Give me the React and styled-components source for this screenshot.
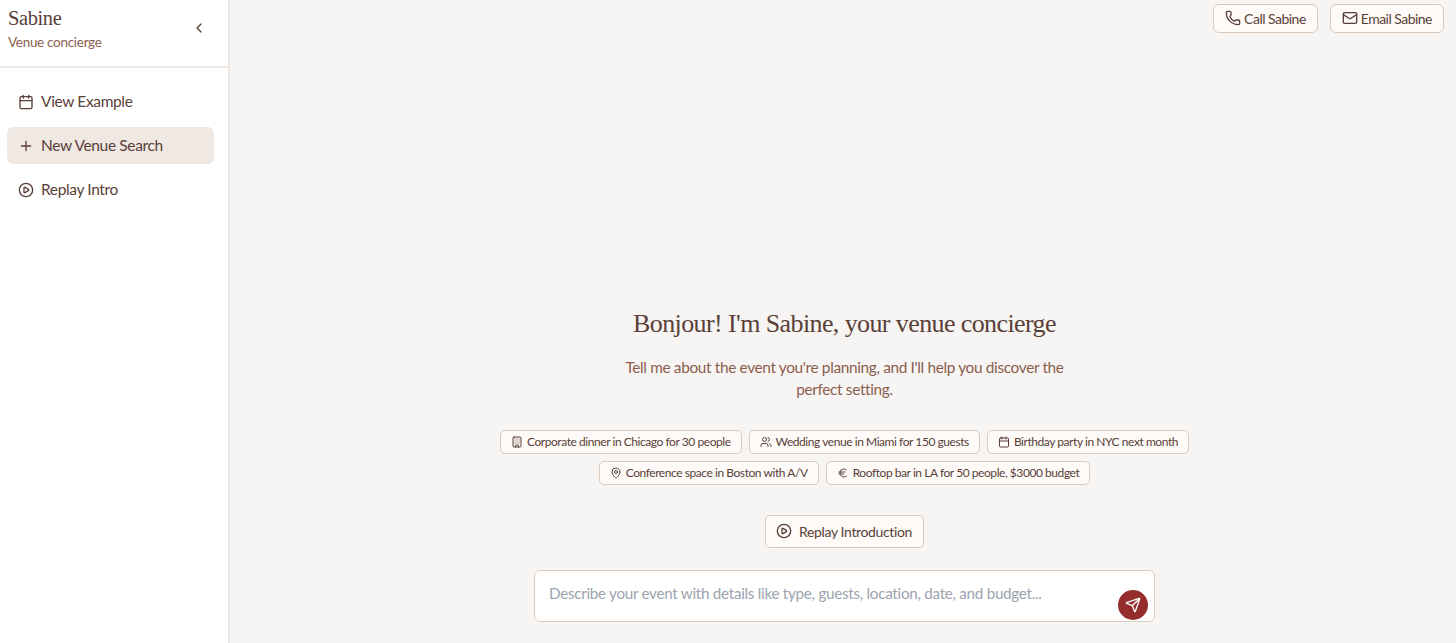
import React from 'react';
import styled, { createGlobalStyle } from 'styled-components';
import {
  Building,
  Calendar,
  ChevronLeft,
  CirclePlay,
  Euro,
  Mail,
  MapPin,
  Phone,
  Plus,
  Send,
  Users,
} from 'lucide-react';

const GlobalStyle = createGlobalStyle`
  html, body {
    margin: 0;
    height: 100%;
    overflow: hidden;
    background: #f7f5f3;
    font-family: "Lato", "Liberation Sans", sans-serif;
    color: #5a3f38;
  }
  #root { height: 100%; }
  * { box-sizing: border-box; }
`;

const Page = styled.div`
  display: flex;
  height: 643px;
`;

const Sidebar = styled.aside`
  width: 230px;
  flex-shrink: 0;
  background: #fff;
  border-right: 2px solid #efe9e5;
`;

const SidebarHeader = styled.div`
  height: 68px;
  display: flex;
  align-items: flex-start;
  justify-content: space-between;
  padding: 6px 21px 0 8px;
  border-bottom: 2px solid #efe9e5;
`;

const Brand = styled.h1`
  margin: 0;
  font-family: "Liberation Serif", serif;
  font-weight: 400;
  font-size: 20.5px;
  letter-spacing: -0.4px;
  line-height: 25px;
  color: #5a3f38;
`;

const Tagline = styled.div`
  margin-top: 2px;
  font-size: 13.5px;
  letter-spacing: -0.3px;
  line-height: 18px;
  color: #8b5e4f;
`;

const CollapseButton = styled.button`
  display: flex;
  margin-top: 14px;
  padding: 0;
  border: none;
  background: none;
  color: #5a3f38;
`;

const SideNav = styled.nav`
  display: flex;
  flex-direction: column;
  gap: 7px;
  padding: 15px 14px 0 7px;
`;

const NavItem = styled.a`
  display: flex;
  align-items: center;
  gap: 7px;
  height: 37px;
  padding: 0 0 2px 11px;
  border-radius: 6px;
  font-size: 15.5px;
  letter-spacing: -0.36px;
  color: #5a3f38;
  background: ${({ $active }) => ($active ? '#f0e8e3' : 'transparent')};

  svg {
    margin-top: 2px;
  }
`;

const Main = styled.main`
  flex: 1;
  display: flex;
  flex-direction: column;
  padding: 4px 12px 21px 15px;
`;

const TopBar = styled.div`
  display: flex;
  justify-content: flex-end;
  gap: 12px;
`;

const TopButton = styled.button`
  display: flex;
  align-items: center;
  gap: 3px;
  height: 29px;
  padding: 0 11px 1px;
  border: 1px solid #dacabd;
  border-radius: 6px;
  background: #fdfaf8;
  font-family: inherit;
  font-size: 14px;
  letter-spacing: -0.52px;
  color: #5a3f38;
`;

const Center = styled.div`
  flex: 1;
  display: flex;
  flex-direction: column;
  align-items: center;
  justify-content: flex-end;
`;

const Heading = styled.h2`
  margin: 0;
  font-family: "Liberation Serif", serif;
  font-weight: 400;
  font-size: 26px;
  letter-spacing: -0.6px;
  line-height: 34px;
  color: #5a3f38;
`;

const Intro = styled.p`
  margin: 15px 0 0;
  width: 448px;
  text-align: center;
  font-size: 15.4px;
  letter-spacing: -0.35px;
  line-height: 22px;
  color: #8b5e4f;
`;

const Chips = styled.div`
  display: flex;
  flex-wrap: wrap;
  justify-content: center;
  gap: 7px;
  width: 720px;
  margin-top: 30px;
`;

const Chip = styled.button`
  display: flex;
  align-items: center;
  gap: 4px;
  height: 24px;
  padding: 0 10px 1px;
  border: 1px solid #dacabd;
  border-radius: 5px;
  background: #fdfaf8;
  font-family: inherit;
  font-size: 12px;
  letter-spacing: -0.44px;
  color: #5a3f38;
`;

const ReplayButton = styled.button`
  display: flex;
  align-items: center;
  gap: 7px;
  height: 33px;
  margin-top: 30px;
  padding: 0 11px 1px 10px;
  border: 1px solid #dacabd;
  border-radius: 5px;
  background: #fdfaf8;
  font-family: inherit;
  font-size: 14px;
  letter-spacing: -0.37px;
  color: #5a3f38;
`;

const InputBox = styled.div`
  position: relative;
  width: 621px;
  height: 52px;
  margin-top: 22px;
  background: #fff;
  border: 1px solid #dacabd;
  border-radius: 6px;
`;

const Prompt = styled.input`
  width: 100%;
  height: 44px;
  padding: 0 50px 0 14px;
  border: none;
  outline: none;
  background: transparent;
  font-family: inherit;
  font-size: 15.2px;
  letter-spacing: -0.27px;
  color: #5a3f38;

  &::placeholder {
    color: #9ca3af;
    opacity: 1;
  }
`;

const SendButton = styled.button`
  position: absolute;
  right: 6px;
  bottom: 1px;
  width: 30px;
  height: 30px;
  display: flex;
  align-items: center;
  justify-content: center;
  padding: 0;
  border: none;
  border-radius: 50%;
  background: #962d2d;
  color: #fff;
`;

const chips = [
  { icon: Building, label: 'Corporate dinner in Chicago for 30 people' },
  { icon: Users, label: 'Wedding venue in Miami for 150 guests' },
  { icon: Calendar, label: 'Birthday party in NYC next month' },
  { icon: MapPin, label: 'Conference space in Boston with A/V' },
  { icon: Euro, label: 'Rooftop bar in LA for 50 people, $3000 budget' },
];

const App = () => (
  <Page>
    <GlobalStyle />
    <Sidebar>
      <SidebarHeader>
        <div>
          <Brand>Sabine</Brand>
          <Tagline>Venue concierge</Tagline>
        </div>
        <CollapseButton aria-label="Collapse sidebar">
          <ChevronLeft size={16} />
        </CollapseButton>
      </SidebarHeader>
      <SideNav>
        <NavItem><Calendar size={16} />View Example</NavItem>
        <NavItem $active><Plus size={16} />New Venue Search</NavItem>
        <NavItem><CirclePlay size={16} />Replay Intro</NavItem>
      </SideNav>
    </Sidebar>
    <Main>
      <TopBar>
        <TopButton><Phone size={16} />Call Sabine</TopButton>
        <TopButton><Mail size={16} />Email Sabine</TopButton>
      </TopBar>
      <Center>
        <Heading>Bonjour! I'm Sabine, your venue concierge</Heading>
        <Intro>Tell me about the event you're planning, and I'll help you discover the perfect setting.</Intro>
        <Chips>
          {chips.map(({ icon: Icon, label }) => (
            <Chip key={label}><Icon size={12} />{label}</Chip>
          ))}
        </Chips>
        <ReplayButton><CirclePlay size={16} />Replay Introduction</ReplayButton>
        <InputBox>
          <Prompt placeholder="Describe your event with details like type, guests, location, date, and budget..." />
          <SendButton aria-label="Send"><Send size={16} /></SendButton>
        </InputBox>
      </Center>
    </Main>
  </Page>
);

export default App;
